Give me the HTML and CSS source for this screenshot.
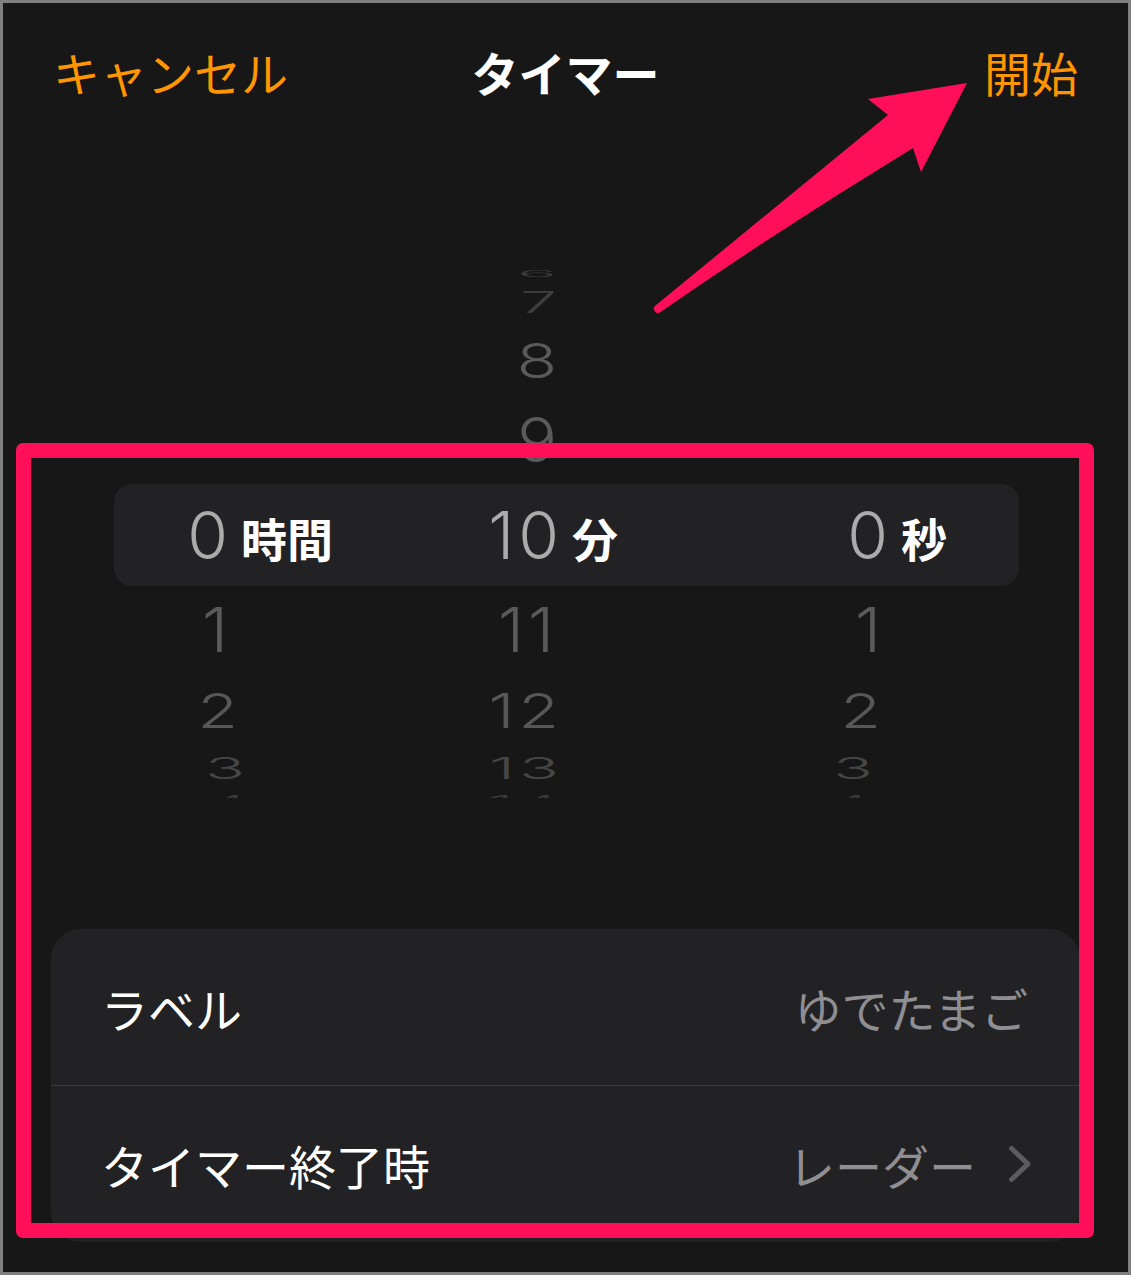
FILE: index.html
```html
<!DOCTYPE html>
<html lang="ja">
<head>
<meta charset="utf-8">
<title>タイマー</title>
<link rel="stylesheet" href="styles.css">
</head>
<body>
<div class="screen">
  <header class="nav">
    <span class="nav-btn nav-left">キャンセル</span>
    <h1 class="nav-title">タイマー</h1>
    <span class="nav-btn nav-right">開始</span>
  </header>

  <section class="picker">
    <div class="prow rm4"><div class="cell c-h"></div><div class="cell c-m"><span class="num">6</span></div><div class="cell c-s"></div></div>
    <div class="prow rm3"><div class="cell c-h"></div><div class="cell c-m"><span class="num">7</span></div><div class="cell c-s"></div></div>
    <div class="prow rm2"><div class="cell c-h"></div><div class="cell c-m"><span class="num">8</span></div><div class="cell c-s"></div></div>
    <div class="prow rm1"><div class="cell c-h"></div><div class="cell c-m"><span class="num">9</span></div><div class="cell c-s"></div></div>
    <div class="prow r0">
      <div class="cell c-h"><span class="num">0</span><span class="unit">時間</span></div>
      <div class="cell c-m"><span class="num">10</span><span class="unit">分</span></div>
      <div class="cell c-s"><span class="num">0</span><span class="unit">秒</span></div>
    </div>
    <div class="prow rp1"><div class="cell c-h"><span class="num">1</span></div><div class="cell c-m"><span class="num">11</span></div><div class="cell c-s"><span class="num">1</span></div></div>
    <div class="prow rp2"><div class="cell c-h"><span class="num">2</span></div><div class="cell c-m"><span class="num">12</span></div><div class="cell c-s"><span class="num">2</span></div></div>
    <div class="prow rp3"><div class="cell c-h"><span class="num">3</span></div><div class="cell c-m"><span class="num">13</span></div><div class="cell c-s"><span class="num">3</span></div></div>
    <div class="prow rp4"><div class="cell c-h"><span class="num">4</span></div><div class="cell c-m"><span class="num">14</span></div><div class="cell c-s"><span class="num">4</span></div></div>
  </section>

  <section class="card">
    <div class="row">
      <span class="row-title">ラベル</span>
      <span class="row-value">ゆでたまご</span>
    </div>
    <div class="row row-link">
      <span class="row-title">タイマー終了時</span>
      <span class="row-value">レーダー<svg class="chev" width="24" height="38" viewBox="0 0 24 38"><path d="M3.5 3.5 L20 19 L3.5 34.5" fill="none" stroke="#5b5b60" stroke-width="5" stroke-linecap="round" stroke-linejoin="round"/></svg></span>
    </div>
  </section>

  <div class="annot-frame"></div>
  <svg class="annot-arrow" width="340" height="270" viewBox="640 60 340 270">
    <path d="M967 83 L868 99 L888 115 L655.5 305.5 A3.6 3.6 0 0 0 660.5 312 Q 785 226 913 148 L921 172 Z" fill="#ff0f5a"/>
  </svg>
</div>
</body>
</html>
```

FILE: styles.css
```css
* { box-sizing: border-box; }

html, body {
  margin: 0;
  padding: 0;
  background: #171717;
}

.screen {
  position: relative;
  width: 1131px;
  height: 1275px;
  border: 3px solid #808080;
  background: #171717;
  overflow: hidden;
  font-family: "Noto Sans CJK JP", "Noto Sans", sans-serif;
}

/* Navigation bar */
.nav {
  height: 136px;
  display: grid;
  grid-template-columns: 1fr auto 1fr;
  align-items: center;
  padding: 0 50px 0 50px;
}

.nav-btn {
  font-size: 47px;
  color: #ff9500;
  line-height: 1;
}

.nav-right { justify-self: end; }

.nav-title {
  margin: 0;
  font-size: 47px;
  font-weight: 700;
  color: #ffffff;
  line-height: 1;
}

/* Picker */
.picker {
  margin-top: 121px;
  display: flex;
  flex-direction: column;
}

.prow {
  display: grid;
  grid-template-columns: 286px 300px 1fr;
  align-items: center;
  margin: 0 109px 0 111px;
}

.cell {
  display: grid;
  align-items: baseline;
}

.c-h { grid-template-columns: 110px 1fr; }
.c-m { grid-template-columns: 155px 1fr; }
.c-s { grid-template-columns: 184px 1fr; }

.num {
  justify-self: end;
  font-family: Inter, "Noto Sans", sans-serif;
  font-weight: 300;
  font-size: 66px;
  letter-spacing: 4px;
  margin-right: -8px;
  line-height: inherit;
  color: #5a5a5a;
}

.unit {
  padding-left: 17px;
  font-size: 46px;
  font-weight: 700;
  color: #ffffff;
  line-height: 1;
  transform: translateY(-2px);
}

.rm4 { height: 27px; line-height: 27px; }
.rm3 { height: 30px; line-height: 30px; }
.rm2 { height: 86px; line-height: 86px; }
.rm1 { height: 74px; line-height: 74px; }
.r0  {
  height: 102px;
  line-height: 1;
  margin-top: 7px;
  background: #222224;
  border-radius: 18px;
}
.rp1 { height: 88px; line-height: 88px; }
.rp2 { height: 72px; line-height: 72px; }
.rp3 { height: 44px; line-height: 44px; }
.rp4 { height: 8px; line-height: 8px; overflow: hidden; }

.r0 .num { color: #ababab; }

.rm4 .num { transform: translateX(-2px) scaleY(.13); color: #3a3a3a; }
.rm3 .num { transform: translateX(-2px) scaleY(.44); color: #3e3e3e; }
.rm2 .num { transform: translateX(-2px) scaleY(.73); color: #5a5a5a; }
.rm1 .num { transform: translateX(-2px) scaleY(.93); color: #5a5a5a; }

.rp1 .num { transform: scaleY(.93); color: #5a5a5a; }
.rp2 .num { transform: scaleY(.73); color: #575757; }
.rp3 .num { transform: scaleY(.44); color: #464646; }
.rp4 .num { transform: translateY(9px) scaleY(.3); color: #3a3a3a; }

.rp1 .c-m .num { transform: translateX(-5px) scaleY(.93); }

.rp2 .c-h .num { transform: translateX(10px) scaleY(.73); }
.rp3 .c-h .num { transform: translateX(17px) scaleY(.44); }
.rp4 .c-h .num { transform: translate(20px, 9px) scaleY(.3); }

.rp1 .c-s .num { transform: translateX(-7px) scaleY(.93); }
.rp2 .c-s .num { transform: translateX(-7px) scaleY(.73); }
.rp3 .c-s .num { transform: translateX(-15px) scaleY(.44); }
.rp4 .c-s .num { transform: translate(-18px, 9px) scaleY(.3); }

/* Settings card */
.card {
  margin: 131px 48px 0 48px;
  background: #222224;
  border-radius: 30px;
  overflow: hidden;
}

.row {
  height: 156px;
  display: flex;
  align-items: center;
  justify-content: space-between;
  padding: 0 52px 0 50px;
  font-size: 47px;
  line-height: 1;
}

.row + .row { border-top: 1px solid #38383a; height: 157px; }

.row-link { padding-right: 48px; }

.row-title { color: #ffffff; }

.row-value {
  display: flex;
  align-items: center;
  color: #8e8e93;
}

.chev {
  margin-left: 32px;
  display: block;
}

/* Annotations */
.annot-frame {
  position: absolute;
  left: 13px;
  top: 440px;
  width: 1078px;
  height: 795px;
  border: 15px solid #ff0f5a;
  border-radius: 7px;
  pointer-events: none;
}

.annot-arrow {
  position: absolute;
  left: 637px;
  top: 57px;
  pointer-events: none;
}
```
